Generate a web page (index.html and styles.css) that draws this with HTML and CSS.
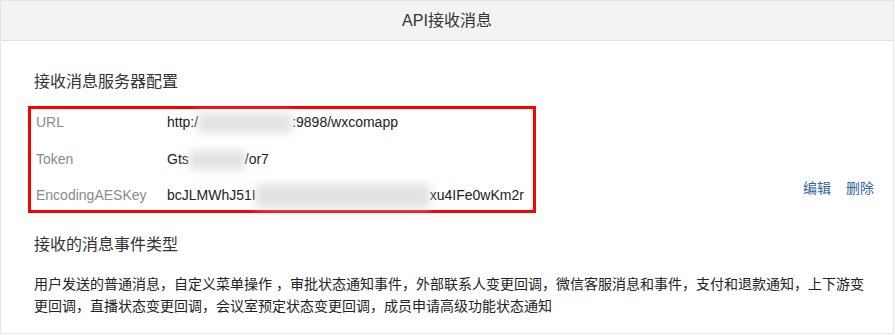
FILE: index.html
```html
<!DOCTYPE html>
<html lang="zh-CN">
<head>
<meta charset="utf-8">
<title>API接收消息</title>
<link rel="stylesheet" href="styles.css">
</head>
<body>
<div class="card">
  <div class="card-header">API接收消息</div>
  <div class="card-body">
    <div class="section-title first">接收消息服务器配置</div>
    <div class="config-row">
      <div class="config-box">
        <div class="kv">
          <div class="k">URL</div>
          <div class="v">http:/<span class="blur blur-url"></span>:9898/wxcomapp</div>
        </div>
        <div class="kv">
          <div class="k">Token</div>
          <div class="v">Gts<span class="blur blur-token"></span>/or7</div>
        </div>
        <div class="kv">
          <div class="k">EncodingAESKey</div>
          <div class="v">bcJLMWhJ51I<span class="blur blur-key"></span>xu4IFe0wKm2r</div>
        </div>
      </div>
      <div class="actions">
        <a class="link">编辑</a>
        <a class="link">删除</a>
      </div>
    </div>
    <div class="section-title second">接收的消息事件类型</div>
    <p class="desc">用户发送的普通消息，自定义菜单操作 ，审批状态通知事件，外部联系人变更回调，微信客服消息和事件，支付和退款通知，上下游变更回调，直播状态变更回调，会议室预定状态变更回调，成员申请高级功能状态通知</p>
  </div>
</div>
</body>
</html>
```
FILE: styles.css
```css
* { box-sizing: border-box; }
body {
  margin: 0;
  background: #fff;
  font-family: "Liberation Sans", "Noto Sans CJK SC", sans-serif;
  color: #333;
}
.card {
  width: 894px;
  height: 334px;
  border: 1px solid #e4e5e7;
  background: #fff;
  overflow: hidden;
}
.card-header {
  height: 40px;
  line-height: 39px;
  background: #f3f3f3;
  border-bottom: 1px solid #dfe1e4;
  text-align: center;
  font-size: 16px;
  color: #333;
}
.card-body {
  padding: 0 19px 0 27px;
}
.section-title {
  font-size: 16px;
  line-height: 22px;
  color: #333;
  margin-left: 6px;
}
.section-title.first { margin-top: 30px; }
.section-title.second { margin-top: 21px; }
.config-row {
  display: flex;
  justify-content: space-between;
  align-items: flex-end;
  margin-top: 13px;
}
.config-box {
  width: 508px;
  border: 3px solid #fa0000;
  padding: 0 0 2px 5px;
  display: flex;
  flex-direction: column;
  gap: 10.5px;
}
.kv {
  display: flex;
  height: 26px;
  line-height: 26px;
  font-size: 14px;
  white-space: nowrap;
}
.k {
  width: 131px;
  color: #8a8a8a;
}
.v {
  color: #222;
}
.blur {
  display: inline-block;
  vertical-align: middle;
  height: 20px;
  background: #dedede;
  filter: blur(4px);
  opacity: 0.85;
}
.blur-url { width: 94px; }
.blur-token { width: 56px; }
.blur-key { width: 174px; height: 24px; }
.actions {
  display: flex;
  gap: 15px;
  padding-bottom: 15px;
  font-size: 14px;
  line-height: 20px;
}
.link {
  color: #33659a;
  cursor: pointer;
}
.desc {
  margin: 17px 0 0 6px;
  font-size: 14px;
  line-height: 22px;
  color: #222;
}
```
